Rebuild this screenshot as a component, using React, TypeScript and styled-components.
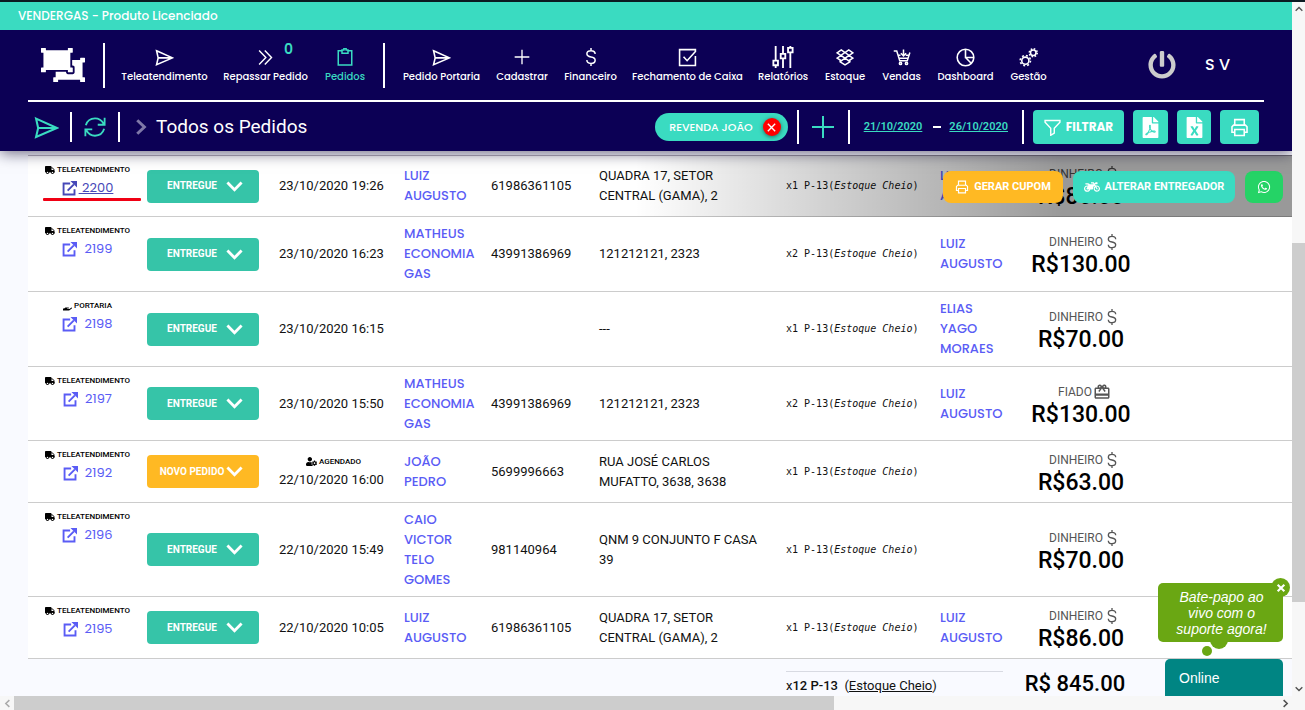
import React from 'react';
import styled, { createGlobalStyle, css } from 'styled-components';
import {
  FaObjectUngroup, FaPowerOff, FaFilePdf, FaFileExcel, FaWhatsapp, FaMotorcycle,
  FaUserCog, FaTruck, FaHandHolding,
} from 'react-icons/fa';
import { MdCardGiftcard } from 'react-icons/md';

const teal = '#3adbc1';
const navy = '#0c0055';
const roboto = "Roboto, 'Liberation Sans', sans-serif";
const display = "Poppins, Inter, 'Liberation Sans', sans-serif";

const GlobalStyle = createGlobalStyle`
  * { box-sizing: border-box; }
  body { margin: 0; font-family: ${roboto}; color: #111; overflow: hidden; }
  button, select { font: inherit; border: 0; margin: 0; padding: 0; background: none; color: inherit; cursor: pointer; }
  a { color: inherit; text-decoration: none; }
  svg { display: block; flex: none; }
`;

/* ---------- line icons ---------- */

type IconProps = { size?: number; width?: number };

const Line = ({ size = 20, width = 2, children }: IconProps & { children: React.ReactNode }) => (
  <svg width={size} height={size} viewBox="0 0 24 24" fill="none" stroke="currentColor" strokeWidth={width} aria-hidden="true">
    {children}
  </svg>
);

const PlaneIcon = (p: IconProps) => (
  <Line {...p}><path d="M2 3.5 22 12.5 2 21 4 12.500zM4 12.500H21" /></Line>
);
const ForwardIcon = (p: IconProps) => (
  <Line {...p}><path d="m3 2 9.500 10L3 22M11 2 20.500 12 11 22" /></Line>
);
const ClipboardIcon = (p: IconProps) => (
  <Line {...p}><path d="M8 3.500H3V22.500H21V3.500H16M8 2.500H10.500V1H13.500V2.500H16V7H8z" /></Line>
);
const PlusIcon = (p: IconProps) => <Line {...p}><path d="M12 1V23M1 12H23" /></Line>;
const DollarIcon = (p: IconProps) => (
  <Line {...p}><path d="M17.500 8C17.500 5 15 3.500 12 3.500S6.500 5 6.500 7.700 9 11.500 12 12s5.500 1.500 5.500 4.200S15 20.500 12 20.500 6.500 19 6.500 16M12 0V4M12 20v4" /></Line>
);
const CheckIcon = (p: IconProps) => (
  <Line {...p}><path d="M22 10V22H2V2H22V5M7 11l4.500 5L22 4.500" /></Line>
);
const SlidersIcon = (p: IconProps) => (
  <Line {...p}><path d="M4 0V16M12 0V8M12 14V24M20 7V24M20 0V2M4 21v3M1.500 16h5v5h-5zM9.500 8.500h5v5h-5zM17.500 2h5v5h-5z" /></Line>
);
const BoxIcon = (p: IconProps) => (
  <Line {...p}><path d="M7 2.500 12 6 17 2.500 22.500 6.500 17.500 10 22.500 13.500 17 17 12 13.500 7 17 1.500 13.500 6.500 10 1.500 6.500zM12 6l5.500 4L12 13.500 6.500 10zM5.500 17v1.500l6.500 4 6.500-4V17" /></Line>
);
const CartIcon = (p: IconProps) => (
  <Line {...p}><path d="M1 4H5L9 17H19L22.500 6M7 9.500h3M17 9.500h4M8 13.500h12M14 2V10M10.500 7l3.500 3.500L17.500 7" /><circle cx="10" cy="20.500" r="1.500" /><circle cx="18" cy="20.500" r="1.500" /></Line>
);
const ChartIcon = (p: IconProps) => (
  <Line {...p}><circle cx="12" cy="12" r="10.500" /><path d="M12 1.500V12H22.500M12 12l7.500 7.500" /></Line>
);
const GearsIcon = (p: IconProps) => (
  <Line {...p}>
    <circle cx="8" cy="16" r="4.500" /><circle cx="8" cy="16" r="6.500" strokeDasharray="2.500 2.600" />
    <circle cx="18" cy="6" r="3.500" /><circle cx="18" cy="6" r="5" strokeDasharray="2 1.930" />
  </Line>
);
const RefreshIcon = (p: IconProps) => (
  <Line {...p}><path d="M2 10C3.500 5 7.500 2.500 12 2.500c4 0 7.500 2.500 9.500 6M22.500 2V9.500H15M22 14c-1.500 5-5.500 7.500-10 7.500-4 0-7.500-2.500-9.500-6M1.500 22V14.500H9" /></Line>
);
const ChevronRight = (p: IconProps) => <Line {...p}><path d="m7 3 9.500 9L7 21" /></Line>;
const ChevronDown = (p: IconProps) => <Line {...p}><path d="m2 6.500 10 10 10-10" /></Line>;
const FunnelIcon = (p: IconProps) => (
  <Line {...p}><path d="M1.500 2H22.500V4.500L14.500 13V20L9.500 23V13L1.500 4.500z" /></Line>
);
const PrintIcon = (p: IconProps) => (
  <Line {...p}><path d="M6 9V2H18V9M6 18H2.500V11L4.500 9H19.500L21.500 11V18H18M6 14.500H18V22H6z" /></Line>
);
const CloseIcon = (p: IconProps) => <Line {...p}><path d="m4 4 16 16M20 4 4 20" /></Line>;
const ExternalIcon = (p: IconProps) => (
  <Line {...p}>
    <path d="M13 4H2.500V21.500H20V13M9 15.500 19 5.500" />
    <path d="M13.500 0H24V10.500z" fill="currentColor" stroke="none" />
  </Line>
);

/* ---------- page frame ---------- */

const Page = styled.div`
  height: 100vh;
  display: grid;
  grid-template: minmax(0, 1fr) 14px / minmax(0, 1fr) 13px;
  border-top: 2px solid #0b1a22;
  background: #f7f7f7;
`;
const View = styled.div`
  position: relative;
  overflow: hidden;
  background: #f9faff;
`;
const Thumb = styled.div` background: #cdcdcd; `;
const Arrow = styled.div`
  display: grid;
  place-items: center;
  color: #505050;
`;
const VerticalBar = styled.div`
  display: grid;
  grid-template-rows: 14px 227fr 359fr 80fr 14px;
  ${Arrow}:first-child svg { transform: rotate(180deg); }
`;
const HorizontalBar = styled.div`
  display: grid;
  grid-template-columns: 14px 820fr 444fr 14px;
  ${Arrow}:first-child { color: #aaa; }
  ${Arrow}:first-child svg { transform: rotate(180deg); }
`;

/* ---------- header ---------- */

const Header = styled.header`
  position: relative;
  z-index: 2;
  background: ${navy};
  color: #fff;
  box-shadow: 0 2px 14px rgba(10, 0, 40, 0.6);
`;
const Licence = styled.div`
  height: 28px;
  padding: 0 18px;
  background: ${teal};
  font: 500 12px/28px ${display};
`;
const NavBar = styled.div`
  display: flex;
  align-items: center;
  height: 72px;
  margin: 0 28px;
  border-bottom: 2px solid #fff;
`;
const Logo = styled.a`
  width: 75px;
  display: flex;
  padding-left: 13px;
`;
const Divider = styled.span<{ $h: number; $before: number; $after: number }>`
  flex: none;
  width: 2px;
  height: ${p => p.$h}px;
  margin: 0 ${p => p.$after}px 0 ${p => p.$before}px;
  background: #fff;
`;
const Nav = styled.nav<{ $gap: number }>`
  display: flex;
  gap: ${p => p.$gap}px;
`;
const NavLink = styled.a<{ $w: number; $on?: boolean }>`
  position: relative;
  width: ${p => p.$w}px;
  display: flex;
  flex-direction: column;
  align-items: center;
  font: 500 10px/18px ${display};
  white-space: nowrap;
  color: ${p => (p.$on ? teal : '#fff')};
`;
const IconSlot = styled.span`
  height: 24px;
  padding-top: 2px;
  display: grid;
  place-items: center;
`;
const Count = styled.span`
  position: absolute;
  top: -4px;
  right: 13px;
  color: ${teal};
  font: 600 14px/18px ${display};
`;
const Account = styled.div`
  display: flex;
  align-items: center;
  gap: 29px;
  margin-left: auto;
  padding-right: 34px;
  font: 500 16px/20px ${display};
  button { color: #ccc; }
`;
const SubBar = styled.div`
  display: flex;
  align-items: center;
  height: 49px;
  margin: 0 33px 0 34px;
  padding-top: 1px;
`;
const TealButton = styled.button`
  color: ${teal};
`;
const Crumb = styled.span`
  color: #7f78a8;
  margin-right: 6px;
`;
const Title = styled.h1`
  margin: 0 auto 0 0;
  font: 400 19px/24px ${roboto};
`;
const Store = styled.span`
  display: flex;
  align-items: center;
  gap: 10px;
  height: 28px;
  padding: 0 7px 0 14px;
  border-radius: 14px;
  background: ${teal};
  font: 500 11px/20px ${display};
`;
const RemoveStore = styled.button`
  display: grid;
  place-items: center;
  width: 18px;
  height: 18px;
  border-radius: 50%;
  background: #f00;
  box-shadow: 0 1px 4px rgba(0, 0, 0, 0.5);
`;
const DateButton = styled.button`
  color: ${teal};
  font: 600 11px/16px ${roboto};
  text-decoration: underline;
`;
const Dash = styled.span`
  width: 8px;
  height: 2px;
  margin: 0 8px 0 11px;
  background: #fff;
`;
const Tools = styled.div`
  display: flex;
  gap: 9px;
`;
const ToolButton = styled.button<{ $w: number }>`
  display: flex;
  align-items: center;
  justify-content: center;
  gap: 5px;
  width: ${p => p.$w}px;
  height: 34px;
  border-radius: 4px;
  background: ${teal};
  color: #fff;
  font: 700 12px/20px ${display};
`;

/* ---------- orders table ---------- */

const Main = styled.main`
  padding: 4px 0 0 28px;
`;
const Table = styled.table`
  width: 100%;
  table-layout: fixed;
  border-collapse: separate;
  border-spacing: 0;
`;
const Row = styled.tr<{ $h: number }>`
  position: relative;
  height: ${p => p.$h}px;
  background: #fff;
`;
const Cell = styled.td<{ $kind?: 'id' | 'status' | 'link' | 'item' | 'center' | 'actions' }>`
  padding: 0 8px;
  border-bottom: 1px solid #ccc;
  vertical-align: middle;
  font: 400 13px/20px ${roboto};
  ${p => p.$kind === 'id' && css`padding: 6px 0 0; vertical-align: top; text-align: center;`}
  ${p => p.$kind === 'status' && css`padding: 0;`}
  ${p => p.$kind === 'link' && css`color: #5a5cf5; font-family: ${display}; font-weight: 500;`}
  ${p => p.$kind === 'item' && css`padding-right: 0; font: 400 10px/20px 'DejaVu Sans Mono', monospace; white-space: nowrap;`}
  ${p => p.$kind === 'center' && css`padding: 2px 0 0; text-align: center;`}
  ${p => p.$kind === 'actions' && css`padding: 0;`}
  tr:first-child > & { border-top: 1px solid #b5b0bd; }
`;
const Origin = styled.div`
  display: flex;
  align-items: center;
  justify-content: center;
  gap: 2px;
  color: #000;
  font: 500 8px/16px ${roboto};
`;
const OrderLink = styled.a<{ $hover?: boolean }>`
  display: flex;
  align-items: center;
  justify-content: center;
  gap: ${p => (p.$hover ? 2 : 7)}px;
  color: ${p => (p.$hover ? '#4648b8' : '#5a5cf5')};
  font: 400 13px/20px ${display};
  text-decoration: ${p => (p.$hover ? 'underline' : 'none')};
  white-space: pre;
`;
const RedMark = styled.div`
  height: 3px;
  margin: 0 6px 0 15px;
  border-radius: 1px;
  background: #f00014;
`;
const StatusBox = styled.label<{ $new?: boolean }>`
  position: relative;
  display: block;
  width: 112px;
  height: 33px;
  border-radius: 4px;
  background: ${p => (p.$new ? '#ffb923' : '#36c4a8')};
  color: #fff;
  svg { position: absolute; right: 16px; top: 8px; pointer-events: none; }
`;
const StatusSelect = styled.select`
  appearance: none;
  width: 100%;
  height: 100%;
  padding-right: 22px;
  font: 700 10px/16px ${roboto};
  text-align: center;
  text-align-last: center;
`;
const Payment = styled.div`
  display: flex;
  align-items: center;
  justify-content: center;
  gap: 1px;
  padding-left: 7px;
  color: #555;
  font: 400 12px/20px ${roboto};
`;
const Price = styled.div`
  color: #000;
  font: 500 23px/26px ${roboto};
`;
const RowActions = styled.div`
  position: absolute;
  top: 0;
  right: 0;
  bottom: 0;
  width: 52%;
  display: flex;
  align-items: center;
  justify-content: flex-end;
  gap: 10px;
  padding: 2px 9px 0 0;
  background: linear-gradient(90deg, rgba(0, 0, 0, 0), rgba(0, 0, 0, 0.4) 65%);
`;
const ActionButton = styled.button<{ $bg: string; $w: number }>`
  display: flex;
  align-items: center;
  justify-content: center;
  gap: 5px;
  width: ${p => p.$w}px;
  height: 32px;
  border-radius: 8px;
  background: ${p => p.$bg};
  color: #fff;
  font: 700 11px/16px ${roboto};
  white-space: nowrap;
`;
const TotalCell = styled.td`
  padding: 12px 13px 0 8px;
  vertical-align: top;
`;
const TotalItem = styled.div`
  padding-top: 4px;
  border-top: 1px solid #d8dae2;
  font: 400 13px/20px ${roboto};
  white-space: pre;
  b { font-weight: 500; }
`;
const TotalPrice = styled.td`
  padding: 12px 12px 0 0;
  vertical-align: top;
  text-align: center;
  color: #000;
  font: 500 22px/26px ${roboto};
  white-space: nowrap;
`;

/* ---------- chat ---------- */

const Chat = styled.aside`
  position: absolute;
  z-index: 3;
  right: 9px;
  bottom: 0;
  width: 125px;
  color: #fff;
`;
const Bubble = styled.p`
  position: relative;
  margin: 0 0 17px;
  padding: 6px 10px 5px 12px;
  border-radius: 5px;
  background: #6aa713;
  font: italic 500 14px/16px 'Liberation Sans', sans-serif;
  text-align: center;
  &::before, &::after { content: ''; position: absolute; border-radius: 50%; background: #6aa713; z-index: -1; }
  &::before { width: 18px; height: 18px; left: 52px; bottom: -7px; }
  &::after { width: 10px; height: 10px; left: 44px; bottom: -14px; }
`;
const CloseChat = styled.button`
  position: absolute;
  z-index: 1;
  top: -5px;
  right: -7px;
  display: grid;
  place-items: center;
  width: 19px;
  height: 19px;
  border-radius: 50%;
  background: #6aa713;
`;
const Online = styled.button`
  display: block;
  width: 118px;
  height: 37px;
  margin-left: auto;
  padding-left: 14px;
  border-radius: 5px 5px 0 0;
  background: #008583;
  color: #fff;
  font: 400 14px/20px 'Liberation Sans', sans-serif;
  text-align: left;
`;

/* ---------- data ---------- */

const mainNav = [
  { label: 'Teleatendimento', w: 83, icon: <PlaneIcon size={19} /> },
  { label: 'Repassar Pedido', w: 81, icon: <ForwardIcon size={17} />, count: 0 },
  { label: 'Pedidos', w: 40, icon: <ClipboardIcon size={18} />, on: true },
];
const secondNav = [
  { label: 'Pedido Portaria', w: 75, icon: <PlaneIcon size={19} /> },
  { label: 'Cadastrar', w: 50, icon: <PlusIcon size={16} /> },
  { label: 'Financeiro', w: 51, icon: <DollarIcon size={18} /> },
  { label: 'Fechamento de Caixa', w: 107, icon: <CheckIcon size={19} /> },
  { label: 'Relatórios', w: 48, icon: <SlidersIcon size={22} width={2} /> },
  { label: 'Estoque', w: 40, icon: <BoxIcon size={18} /> },
  { label: 'Vendas', w: 37, icon: <CartIcon size={18} /> },
  { label: 'Dashboard', w: 55, icon: <ChartIcon size={19} /> },
  { label: 'Gestão', w: 35, icon: <GearsIcon size={19} /> },
];

type Order = {
  id: string; h: number; date: string; client?: string; phone?: string; address: string;
  qty: number; driver?: string; price: string; gate?: boolean; fresh?: boolean; credit?: boolean; hover?: boolean;
};
const orders: Order[] = [
  { id: '2200', h: 62, date: '23/10/2020 19:26', client: 'LUIZ AUGUSTO', phone: '61986361105', address: 'QUADRA 17, SETOR CENTRAL (GAMA), 2', qty: 1, driver: 'LUIZ AUGUSTO', price: '86.00', hover: true },
  { id: '2199', h: 75, date: '23/10/2020 16:23', client: 'MATHEUS ECONOMIA GAS', phone: '43991386969', address: '121212121, 2323', qty: 2, driver: 'LUIZ AUGUSTO', price: '130.00' },
  { id: '2198', h: 75, date: '23/10/2020 16:15', address: '---', qty: 1, driver: 'ELIAS YAGO MORAES', price: '70.00', gate: true },
  { id: '2197', h: 74, date: '23/10/2020 15:50', client: 'MATHEUS ECONOMIA GAS', phone: '43991386969', address: '121212121, 2323', qty: 2, driver: 'LUIZ AUGUSTO', price: '130.00', credit: true },
  { id: '2192', h: 62, date: '22/10/2020 16:00', client: 'JOÃO PEDRO', phone: '5699996663', address: 'RUA JOSÉ CARLOS MUFATTO, 3638, 3638', qty: 1, price: '63.00', fresh: true },
  { id: '2196', h: 94, date: '22/10/2020 15:49', client: 'CAIO VICTOR TELO GOMES', phone: '981140964', address: 'QNM 9 CONJUNTO F CASA 39', qty: 1, price: '70.00' },
  { id: '2195', h: 62, date: '22/10/2020 10:05', client: 'LUIZ AUGUSTO', phone: '61986361105', address: 'QUADRA 17, SETOR CENTRAL (GAMA), 2', qty: 1, driver: 'LUIZ AUGUSTO', price: '86.00' },
];
const columns = [119, 124, 125, 87, 108, 187, 154, 84, 130];

type NavEntry = { label: string; w: number; icon: React.ReactNode; on?: boolean; count?: number };

const NavItems = ({ items, gap }: { items: NavEntry[]; gap: number }) => (
  <Nav $gap={gap}>
    {items.map(i => (
      <NavLink key={i.label} href="#" $w={i.w} $on={i.on}>
        <IconSlot>{i.icon}</IconSlot>
        {i.label}
        {i.count !== undefined && <Count>{i.count}</Count>}
      </NavLink>
    ))}
  </Nav>
);

const OrderRow = ({ o }: { o: Order }) => (
  <Row $h={o.h}>
    <Cell $kind="id">
      <Origin>
        {o.gate ? <FaHandHolding size={9} /> : <FaTruck size={10} />}
        {o.gate ? 'PORTARIA' : 'TELEATENDIMENTO'}
      </Origin>
      <OrderLink href="#" $hover={o.hover}>
        <ExternalIcon size={15} width={3} />{o.hover ? ` ${o.id}` : o.id}
      </OrderLink>
      {o.hover && <RedMark />}
    </Cell>
    <Cell $kind="status">
      <StatusBox $new={o.fresh}>
        <StatusSelect aria-label={`Status ${o.id}`} defaultValue={o.fresh ? 'NOVO PEDIDO' : 'ENTREGUE'}>
          <option>{o.fresh ? 'NOVO PEDIDO' : 'ENTREGUE'}</option>
        </StatusSelect>
        <ChevronDown size={17} width={4} />
      </StatusBox>
    </Cell>
    <Cell>
      {o.fresh && <Origin><FaUserCog size={11} />AGENDADO</Origin>}
      {o.date}
    </Cell>
    <Cell $kind="link">{o.client && <a href="#">{o.client}</a>}</Cell>
    <Cell>{o.phone}</Cell>
    <Cell>{o.address}</Cell>
    <Cell $kind="item">x{o.qty} P-13(<i>Estoque Cheio</i>)</Cell>
    <Cell $kind="link">{o.driver && <a href="#">{o.driver}</a>}</Cell>
    <Cell $kind="center">
      <Payment>
        {o.credit ? 'FIADO' : 'DINHEIRO'}
        {o.credit ? <MdCardGiftcard size={18} /> : <DollarIcon size={16} />}
      </Payment>
      <Price>R${o.price}</Price>
    </Cell>
    <Cell $kind="actions">
      {o.hover && (
        <RowActions>
          <ActionButton $bg="#ffb923" $w={120}><PrintIcon size={14} />GERAR CUPOM</ActionButton>
          <ActionButton $bg={teal} $w={162}><FaMotorcycle size={16} />ALTERAR ENTREGADOR</ActionButton>
          <ActionButton $bg="#25d366" $w={38} aria-label="WhatsApp"><FaWhatsapp size={14} /></ActionButton>
        </RowActions>
      )}
    </Cell>
  </Row>
);

export default function App() {
  return (
    <Page>
      <GlobalStyle />
      <View>
        <Header>
          <Licence>VENDERGAS - Produto Licenciado</Licence>
          <NavBar>
            <Logo href="#" aria-label="Início"><FaObjectUngroup size={44} /></Logo>
            <Divider $h={45} $before={0} $after={18} />
            <NavItems items={mainNav} gap={19} />
            <Divider $h={45} $before={18} $after={19} />
            <NavItems items={secondNav} gap={18} />
            <Account>
              <button aria-label="Sair"><FaPowerOff size={28} /></button>
              S V
            </Account>
          </NavBar>
          <SubBar>
            <TealButton aria-label="Enviar"><PlaneIcon size={25} /></TealButton>
            <Divider $h={30} $before={11} $after={12} />
            <TealButton aria-label="Atualizar"><RefreshIcon size={22} /></TealButton>
            <Divider $h={30} $before={12} $after={12} />
            <Crumb><ChevronRight size={18} width={4} /></Crumb>
            <Title>Todos os Pedidos</Title>
            <Store>
              REVENDA JOÃO
              <RemoveStore aria-label="Remover revenda"><CloseIcon size={11} width={3} /></RemoveStore>
            </Store>
            <Divider $h={34} $before={9} $after={12} />
            <TealButton aria-label="Adicionar"><PlusIcon size={24} /></TealButton>
            <Divider $h={34} $before={13} $after={14} />
            <DateButton>21/10/2020</DateButton>
            <Dash />
            <DateButton>26/10/2020</DateButton>
            <Divider $h={34} $before={14} $after={9} />
            <Tools>
              <ToolButton $w={91}><FunnelIcon size={17} />FILTRAR</ToolButton>
              <ToolButton $w={35} aria-label="Exportar PDF"><FaFilePdf size={21} /></ToolButton>
              <ToolButton $w={34} aria-label="Exportar Excel"><FaFileExcel size={21} /></ToolButton>
              <ToolButton $w={39} aria-label="Imprimir"><PrintIcon size={19} /></ToolButton>
            </Tools>
          </SubBar>
        </Header>
        <Main>
          <Table>
            <colgroup>
              {columns.map((w, i) => <col key={i} style={{ width: w }} />)}
              <col />
            </colgroup>
            <tbody>{orders.map(o => <OrderRow key={o.id} o={o} />)}</tbody>
            <tfoot>
              <tr>
                <td colSpan={6} />
                <TotalCell colSpan={2}>
                  <TotalItem>x<b>12 P-13</b>  (<u>Estoque Cheio</u>)</TotalItem>
                </TotalCell>
                <TotalPrice>R$ 845.00</TotalPrice>
                <td />
              </tr>
            </tfoot>
          </Table>
        </Main>
        <Chat>
          <CloseChat aria-label="Fechar"><CloseIcon size={10} width={5} /></CloseChat>
          <Bubble>Bate-papo ao vivo com o suporte agora!</Bubble>
          <Online>Online</Online>
        </Chat>
      </View>
      <VerticalBar>
        <Arrow><ChevronDown size={8} width={4} /></Arrow>
        <div />
        <Thumb />
        <div />
        <Arrow><ChevronDown size={8} width={4} /></Arrow>
      </VerticalBar>
      <HorizontalBar>
        <Arrow><ChevronRight size={9} width={4} /></Arrow>
        <Thumb />
        <div />
        <Arrow><ChevronRight size={9} width={4} /></Arrow>
      </HorizontalBar>
    </Page>
  );
}
